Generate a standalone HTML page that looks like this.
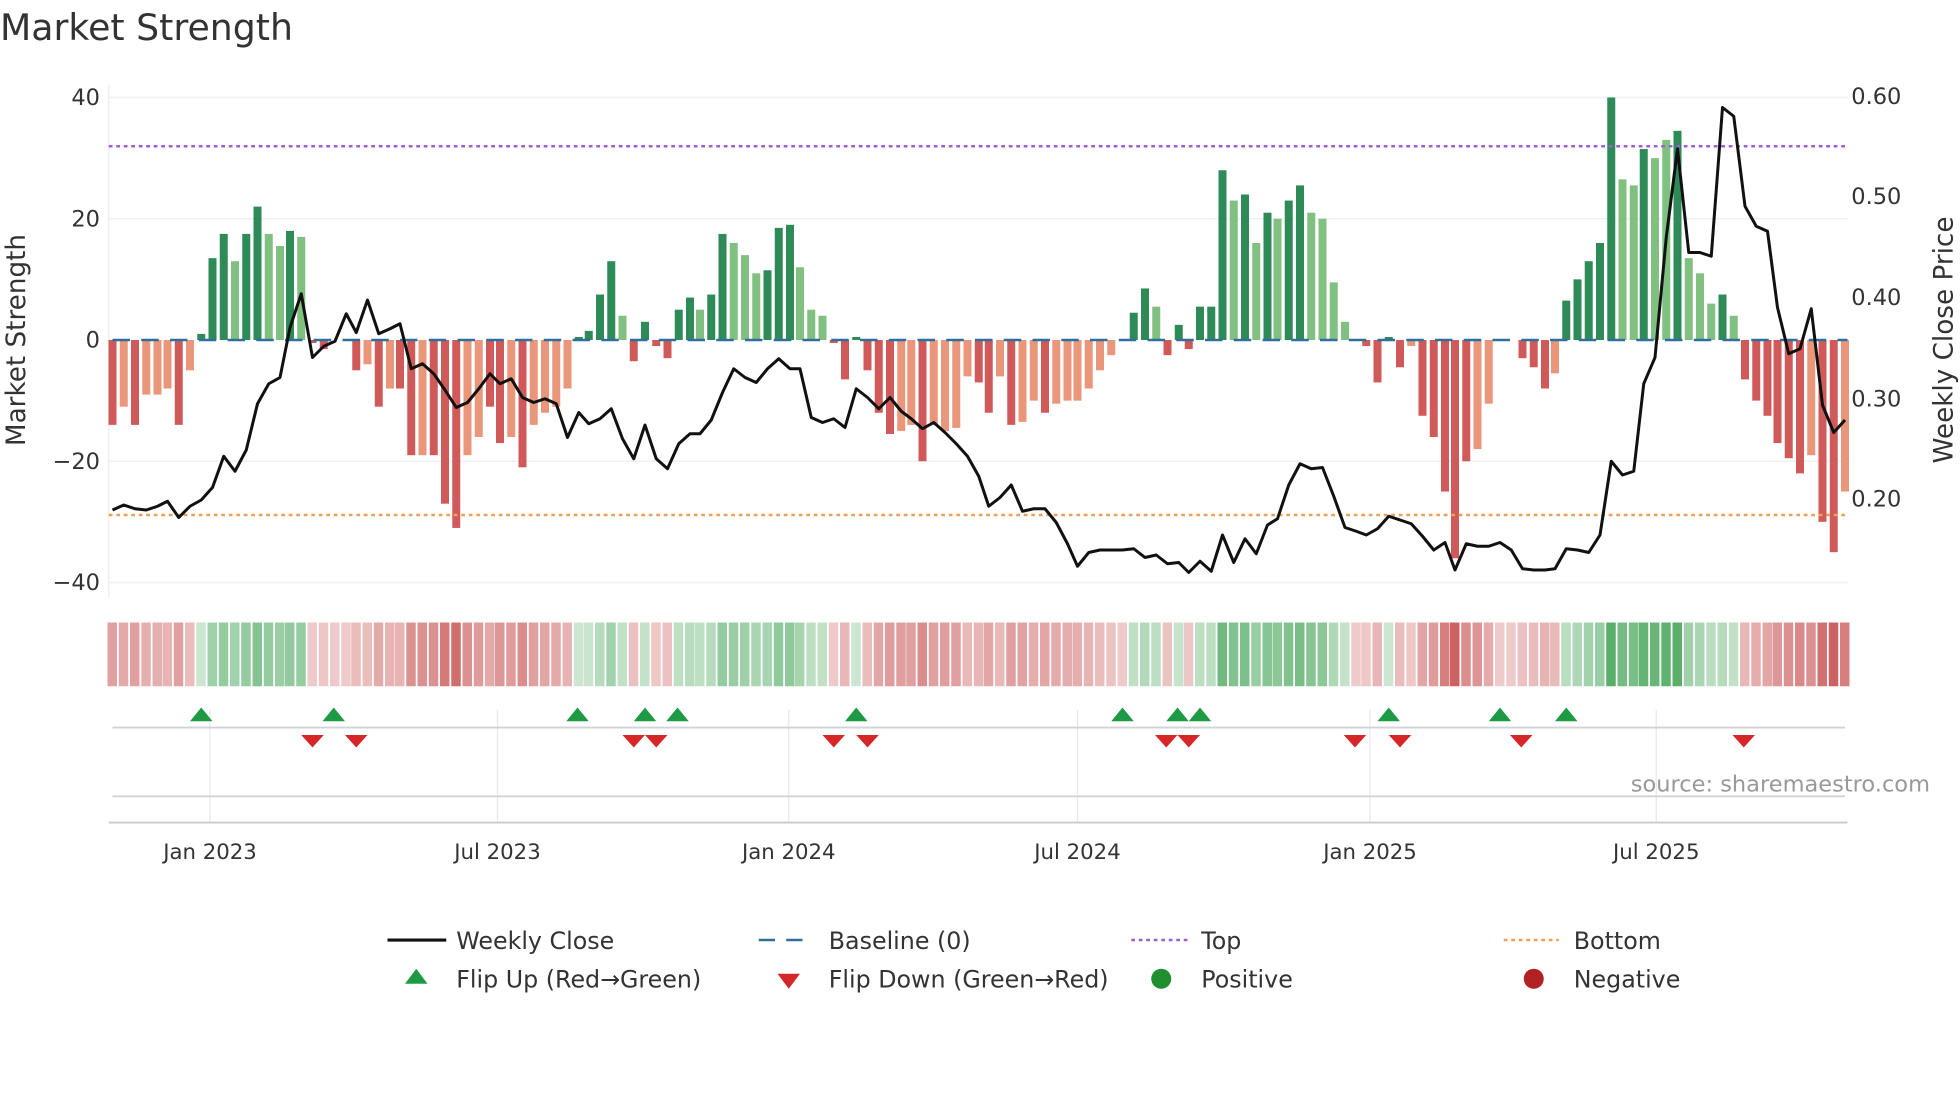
<!DOCTYPE html>
<html><head><meta charset="utf-8">
<style>
html,body{margin:0;padding:0;background:#fff;}
svg{display:block;font-family:"DejaVu Sans","Liberation Sans",sans-serif;}
</style></head>
<body>
<svg id="s" width="1960" height="1102" viewBox="0 0 1568 881.6" xmlns="http://www.w3.org/2000/svg">
<rect width="1568" height="882" fill="#fff"/>
<text x="0" y="32" font-size="29" fill="#333">Market Strength</text>
<g stroke="#eef0f3" stroke-width="1.2">
<line x1="87" x2="1478" y1="78" y2="78"/><line x1="87" x2="1478" y1="175" y2="175"/>
<line x1="87" x2="1478" y1="369" y2="369"/><line x1="87" x2="1478" y1="466" y2="466"/>
<line x1="87" x2="87" y1="68" y2="478"/>
</g>
<g font-size="18" fill="#333" text-anchor="end">
<text x="80" y="84">40</text><text x="80" y="181">20</text><text x="80" y="278">0</text>
<text x="80" y="375">−20</text><text x="80" y="472">−40</text>
</g>
<g font-size="18" fill="#333">
<text x="1481" y="83">0.60</text><text x="1481" y="163">0.50</text><text x="1481" y="244">0.40</text>
<text x="1481" y="325">0.30</text><text x="1481" y="405">0.20</text>
</g>
<text transform="translate(20,272) rotate(-90)" font-size="21" fill="#333" text-anchor="middle">Market Strength</text>
<text transform="translate(1562,272) rotate(-90)" font-size="21" fill="#333" text-anchor="middle">Weekly Close Price</text>
<g id="bars"></g>
<line x1="87" x2="1478" y1="117" y2="117" stroke="#9b5fd6" stroke-width="2" stroke-dasharray="3,3"/>
<line x1="87" x2="1478" y1="412" y2="412" stroke="#f0a052" stroke-width="2" stroke-dasharray="3,3"/>
<line x1="90" x2="1478" y1="272" y2="272" stroke="#2f6f9a" stroke-width="2" stroke-dasharray="14,9"/>
<polyline id="price" fill="none" stroke="#111" stroke-width="2.4" stroke-linejoin="round"/>
<g id="heat"></g>
<g stroke="#e6e8ec" stroke-width="1">
<line x1="168" x2="168" y1="568" y2="658"/><line x1="398" x2="398" y1="568" y2="658"/>
<line x1="631" x2="631" y1="568" y2="658"/><line x1="862" x2="862" y1="568" y2="658"/>
<line x1="1096" x2="1096" y1="568" y2="658"/><line x1="1325" x2="1325" y1="568" y2="658"/>
</g>
<line x1="90" x2="1476" y1="582" y2="582" stroke="#d0d3d8" stroke-width="1.5"/>
<line x1="90" x2="1476" y1="637" y2="637" stroke="#d0d3d8" stroke-width="1.5"/>
<line x1="87" x2="1478" y1="658" y2="658" stroke="#c8cbd0" stroke-width="1.5"/>
<g id="flips"></g>
<text x="1544" y="633" font-size="18" fill="#999" text-anchor="end">source: sharemaestro.com</text>
<g font-size="17" fill="#333" text-anchor="middle">
<text x="168" y="687">Jan 2023</text><text x="398" y="687">Jul 2023</text><text x="631" y="687">Jan 2024</text>
<text x="862" y="687">Jul 2024</text><text x="1096" y="687">Jan 2025</text><text x="1325" y="687">Jul 2025</text>
</g>
<g font-size="19" fill="#333">
<line x1="310" x2="357" y1="752" y2="752" stroke="#111" stroke-width="2.5"/>
<text x="365" y="759">Weekly Close</text>
<line x1="607" x2="650" y1="752" y2="752" stroke="#2f6f9a" stroke-width="2" stroke-dasharray="13,9"/>
<text x="663" y="759">Baseline (0)</text>
<line x1="905" x2="950" y1="752" y2="752" stroke="#9b5fd6" stroke-width="2" stroke-dasharray="3,3"/>
<text x="961" y="759">Top</text>
<line x1="1203" x2="1247" y1="752" y2="752" stroke="#f0a052" stroke-width="2" stroke-dasharray="3,3"/>
<text x="1259" y="759">Bottom</text>
<polygon points="324,787 342,787 333,775" fill="#1e9a45"/>
<text x="365" y="790">Flip Up (Red→Green)</text>
<polygon points="622,779 640,779 631,791" fill="#d62728"/>
<text x="663" y="790">Flip Down (Green→Red)</text>
<circle cx="929" cy="783" r="8" fill="#1f8f2f"/>
<text x="961" y="790">Positive</text>
<circle cx="1227" cy="783" r="8" fill="#b22222"/>
<text x="1259" y="790">Negative</text>
</g>
</svg>
<script>
var B=[[90,-14,1],[99,-11,0],[108,-14,1],[117,-9,0],[126,-9,0],[134,-8,0],[143,-14,1],[152,-5,0],[161,1,1],[170,13.5,1],[179,17.5,1],[188,13,0],[197,17.5,1],[206,22,1],[215,17.5,0],[224,15.5,0],[232,18,1],[241,17,0],[250,-0.5,1],[259,-1.5,1],[268,0,0],[277,0,0],[285,-5,1],[294,-4,0],[303,-11,1],[312,-8,0],[320,-8,1],[329,-19,1],[338,-19,0],[347,-19,1],[356,-27,1],[365,-31,1],[374,-19,0],[383,-16,0],[392,-11,1],[400,-17,1],[409,-16,0],[418,-21,1],[427,-14,0],[436,-12,0],[445,-11,0],[454,-8,0],[463,0.5,1],[471,1.5,1],[480,7.5,1],[489,13,1],[498,4,0],[507,-3.5,1],[516,3,1],[525,-1,1],[534,-3,1],[543,5,1],[552,7,1],[560,5,0],[569,7.5,1],[578,17.5,1],[587,16,0],[596,14,0],[605,11,0],[614,11.5,1],[623,18.5,1],[632,19,1],[640,12,0],[649,5,0],[658,4,0],[667,-0.5,1],[676,-6.5,1],[685,0.5,1],[694,-5,1],[703,-12,1],[712,-15.5,1],[721,-15,0],[729,-14,0],[738,-20,1],[747,-14,0],[756,-15,0],[765,-14.5,0],[774,-6,0],[783,-7,1],[791,-12,1],[800,-6,0],[809,-14,1],[818,-13.5,0],[827,-10,0],[836,-12,1],[845,-10.5,0],[854,-10,0],[862,-10,0],[871,-8,0],[880,-5,0],[889,-2.5,0],[898,0,0],[907,4.5,1],[916,8.5,1],[925,5.5,0],[934,-2.5,1],[943,2.5,1],[951,-1.5,1],[960,5.5,1],[969,5.5,1],[978,28,1],[987,23,0],[996,24,1],[1005,16,0],[1014,21,1],[1022,20,0],[1031,23,1],[1040,25.5,1],[1049,21,0],[1058,20,0],[1067,9.5,0],[1076,3,0],[1085,0,0],[1093,-1,1],[1102,-7,1],[1111,0.5,1],[1120,-4.5,1],[1129,-1,0],[1138,-12.5,1],[1147,-16,1],[1156,-25,1],[1164,-36,1],[1173,-20,1],[1182,-18,0],[1191,-10.5,0],[1200,0,0],[1209,0,0],[1218,-3,1],[1227,-4.5,1],[1236,-8,1],[1244,-5.5,0],[1253,6.5,1],[1262,10,1],[1271,13,1],[1280,16,1],[1289,40,1],[1298,26.5,0],[1307,25.5,0],[1315,31.5,1],[1324,30,0],[1333,33,0],[1342,34.5,1],[1351,13.5,0],[1360,11,0],[1369,6,0],[1378,7.5,1],[1387,4,0],[1396,-6.5,1],[1405,-10,1],[1414,-12.5,1],[1422,-17,1],[1431,-19.5,1],[1440,-22,1],[1449,-19,0],[1458,-30,1],[1467,-35,1],[1476,-25,0]];
var P=[[90,408],[99,404],[108,407],[117,408],[126,405],[134,401],[143,414],[152,405],[161,400],[170,390],[179,365],[188,377],[197,360],[206,323],[215,307],[224,302],[232,262],[241,235],[250,286],[259,277],[268,273],[277,251],[285,266],[294,240],[303,267],[312,263],[320,259],[329,295],[338,291],[347,299],[356,312],[365,326],[374,322],[383,311],[392,299],[400,307],[409,303],[418,318],[427,322],[436,319],[445,323],[454,350],[463,330],[471,339],[480,335],[489,327],[498,351],[507,367],[516,340],[525,367],[534,375],[543,355],[552,347],[560,347],[569,336],[578,314],[587,295],[596,302],[605,306],[614,295],[623,287],[632,295],[640,295],[649,334],[658,338],[667,335],[676,342],[685,311],[694,318],[703,327],[712,318],[721,329],[729,335],[738,343],[747,338],[756,346],[765,355],[774,365],[783,381],[791,405],[800,398],[809,388],[818,409],[827,407],[836,407],[845,418],[854,435],[862,453],[871,442],[880,440],[889,440],[898,440],[907,439],[916,446],[925,444],[934,451],[943,450],[951,458],[960,449],[969,457],[978,428],[987,450],[996,431],[1005,443],[1014,420],[1022,415],[1031,388],[1040,371],[1049,375],[1058,374],[1067,397],[1076,422],[1085,425],[1093,428],[1102,423],[1111,413],[1120,416],[1129,419],[1138,429],[1147,440],[1156,434],[1164,456],[1173,435],[1182,437],[1191,437],[1200,434],[1209,440],[1218,455],[1227,456],[1236,456],[1244,455],[1253,439],[1262,440],[1271,442],[1280,428],[1289,369],[1298,380],[1307,377],[1315,307],[1324,286],[1333,190],[1342,119],[1351,202],[1360,202],[1369,205],[1378,86],[1387,93],[1396,165],[1405,181],[1414,185],[1422,246],[1431,283],[1440,279],[1449,247],[1458,324],[1467,346],[1476,336]];
var NS="http://www.w3.org/2000/svg";
function el(t,a,p){var e=document.createElementNS(NS,t);for(var k in a)e.setAttribute(k,a[k]);p.appendChild(e);return e;}
var bars=document.getElementById('bars'),heat=document.getElementById('heat');
B.forEach(function(b){
 var x=b[0],v=b[1],d=b[2],h=Math.abs(v)*4.85,y=v>=0?272-h:272;
 var c=v>=0?(d?'#2e8a57':'#80c080'):(d?'#d05a5a':'#e9967a');
 if(h>0.3)el('rect',{x:x-3.2,y:y,width:6.4,height:h,fill:c},bars);
 var m=Math.min(Math.abs(v)/35,1);var col;
 if(v>0){var a=0.25+0.6*m;col='rgba(60,160,80,'+a+')';}
 else {var a2=0.3+0.6*m;col='rgba(200,80,80,'+a2+')';}
 el('rect',{x:x-4,y:498,width:7.6,height:51,fill:col},heat);
});
document.getElementById('price').setAttribute('points',P.map(function(p){return p.join(',')}).join(' '));
var fl=document.getElementById('flips');
[161,267,462,516,542,685,898,942,960,1111,1200,1253].forEach(function(x){el('polygon',{points:(x-9)+',577 '+(x+9)+',577 '+x+',566',fill:'#1e9a45'},fl);});
[250,285,507,525,667,694,933,951,1084,1120,1217,1395].forEach(function(x){el('polygon',{points:(x-9)+',588 '+(x+9)+',588 '+x+',598',fill:'#d62728'},fl);});
</script>
</body></html>
